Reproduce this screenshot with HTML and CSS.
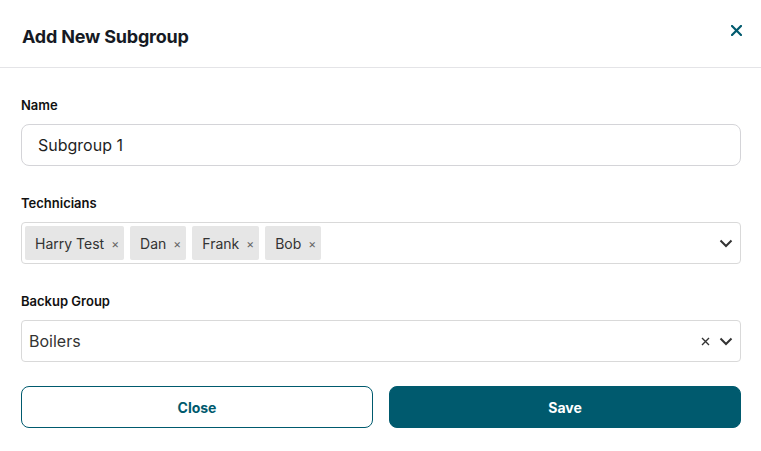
FILE: index.html
```html
<!DOCTYPE html>
<html>
<head>
<meta charset="utf-8">
<link rel="stylesheet" href="styles.css">
</head>
<body>
<div class="modal">
  <div class="modal-header">
    <h2 class="title">Add New Subgroup</h2>
    <button class="close-x" aria-label="Close">
      <svg width="11" height="11" viewBox="0 0 11 11"><path d="M1 1L10 10M10 1L1 10" stroke="#005a6e" stroke-width="2.2" stroke-linecap="square"/></svg>
    </button>
  </div>
  <div class="modal-body">
    <div class="field">
      <label class="label">Name</label>
      <div class="input">Subgroup 1</div>
    </div>
    <div class="field">
      <label class="label">Technicians</label>
      <div class="select">
        <div class="chips">
          <span class="chip">Harry Test<span class="chip-x">×</span></span>
          <span class="chip">Dan<span class="chip-x">×</span></span>
          <span class="chip">Frank<span class="chip-x">×</span></span>
          <span class="chip">Bob<span class="chip-x">×</span></span>
        </div>
        <div class="indicators">
          <svg class="chev" width="14" height="9" viewBox="0 0 14 9"><path d="M1.5 1.5L7 7L12.5 1.5" fill="none" stroke="#333" stroke-width="2"/></svg>
        </div>
      </div>
    </div>
    <div class="field">
      <label class="label">Backup Group</label>
      <div class="select">
        <div class="value">Boilers</div>
        <div class="indicators">
          <svg class="clear" width="9" height="9" viewBox="0 0 9 9"><path d="M1 1L8 8M8 1L1 8" stroke="#333" stroke-width="1.4"/></svg>
          <svg class="chev" width="14" height="9" viewBox="0 0 14 9"><path d="M1.5 1.5L7 7L12.5 1.5" fill="none" stroke="#333" stroke-width="2"/></svg>
        </div>
      </div>
    </div>
    <div class="actions">
      <button class="btn btn-outline">Close</button>
      <button class="btn btn-primary">Save</button>
    </div>
  </div>
</div>
</body>
</html>
```

FILE: styles.css
```css
* { box-sizing: border-box; }
html, body { margin: 0; padding: 0; background: #fff; }
body { font-family: Inter, "Noto Sans", sans-serif; color: #111; }

.modal { width: 761px; height: 451px; background: #fff; }

.modal-header {
  height: 68px;
  border-bottom: 1px solid #e4e4e7;
  display: flex;
  align-items: center;
  justify-content: space-between;
  padding: 6px 19px 0 22px;
}
.title {
  margin: 0;
  font-size: 18px;
  font-weight: 700;
  color: #161a24;
  letter-spacing: -0.2px;
}
.close-x {
  border: 0;
  background: none;
  padding: 0;
  margin-top: -12px;
  width: 11px;
  height: 11px;
  display: flex;
  cursor: pointer;
}

.modal-body { padding: 29px 20px 0 21px; }

.field { display: flex; flex-direction: column; margin-bottom: 29px; }
.field:nth-child(3) { margin-bottom: 24px; }
.label {
  font-size: 13px;
  line-height: 16px;
  font-weight: 600;
  color: #111;
  margin-bottom: 11px;
}
.input {
  height: 42px;
  border: 1px solid #d4d4d8;
  border-radius: 8px;
  padding: 0 16px;
  display: flex;
  align-items: center;
  font-size: 16px;
  color: #1f1f1f;
}

.select {
  height: 42px;
  border: 1px solid #d9d9d9;
  border-radius: 4px;
  display: flex;
  align-items: center;
  justify-content: space-between;
  padding: 0 7px 0 3px;
}
.chips { display: flex; gap: 6px; }
.chip {
  height: 34px;
  background: #e6e6e6;
  border-radius: 2px;
  display: flex;
  align-items: center;
  padding: 0 3px 0 10px;
  font-size: 14px;
  color: #333;
}
.chip-x {
  font-size: 12px;
  color: #666;
  margin-left: 5px;
  padding: 0 2px;
}
.value {
  font-size: 16px;
  color: #333;
  padding-left: 4px;
}
.indicators { display: flex; align-items: center; gap: 9px; }
.clear { display: block; }
.chev { display: block; }

.actions { display: flex; gap: 16px; }
.btn {
  flex: 1;
  height: 42px;
  border-radius: 8px;
  font-family: Inter, "Noto Sans", sans-serif;
  font-size: 14px;
  font-weight: 700;
  cursor: pointer;
}
.btn-outline {
  background: #fff;
  border: 1px solid #005a6e;
  color: #005a6e;
}
.btn-primary {
  background: #005a6e;
  border: 1px solid #005a6e;
  color: #fff;
}
```
